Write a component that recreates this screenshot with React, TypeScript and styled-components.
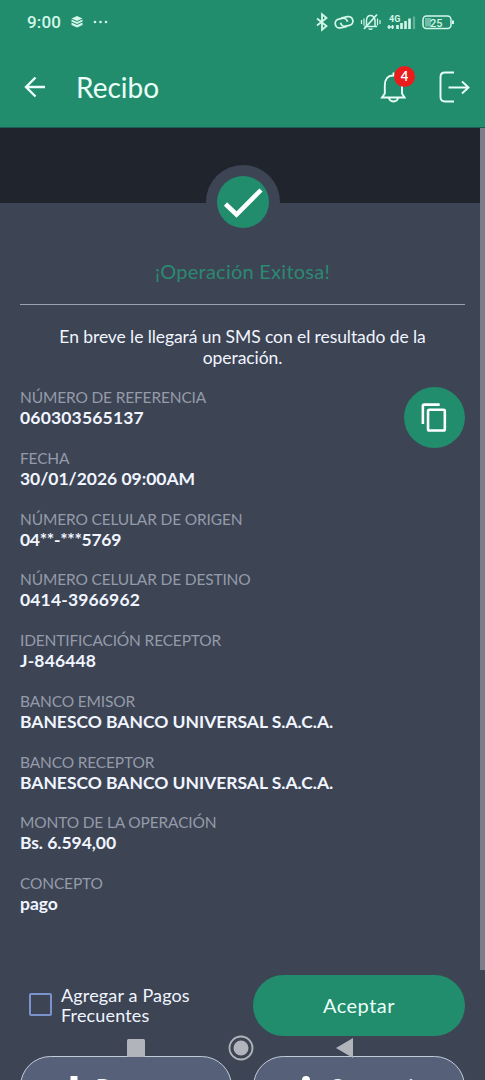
import React from 'react';
import styled, { createGlobalStyle } from 'styled-components';

interface Campo {
  etiqueta: string;
  valor: string;
  espaciado?: number;
}

const campos: Campo[] = [
  { etiqueta: 'NÚMERO DE REFERENCIA', valor: '060303565137', espaciado: 0.17 },
  { etiqueta: 'FECHA', valor: '30/01/2026 09:00AM' },
  { etiqueta: 'NÚMERO CELULAR DE ORIGEN', valor: '04**-***5769', espaciado: -0.3 },
  { etiqueta: 'NÚMERO CELULAR DE DESTINO', valor: '0414-3966962', espaciado: 0.15 },
  { etiqueta: 'IDENTIFICACIÓN RECEPTOR', valor: 'J-846448', espaciado: 0.15 },
  { etiqueta: 'BANCO EMISOR', valor: 'BANESCO BANCO UNIVERSAL S.A.C.A.' },
  { etiqueta: 'BANCO RECEPTOR', valor: 'BANESCO BANCO UNIVERSAL S.A.C.A.' },
  { etiqueta: 'MONTO DE LA OPERACIÓN', valor: 'Bs. 6.594,00' },
  { etiqueta: 'CONCEPTO', valor: 'pago' },
];

const GlobalStyle = createGlobalStyle`
  * {
    box-sizing: border-box;
  }

  body {
    margin: 0;
    background: #3d4454;
    font-family: Lato, sans-serif;
  }

  svg {
    display: block;
    flex: none;
  }

  button {
    font-family: inherit;
    padding: 0;
    border: none;
    background: none;
    color: inherit;
  }
`;

const Screen = styled.div`
  position: relative;
  width: 485px;
  height: 1080px;
  overflow: hidden;
  display: flex;
  flex-direction: column;
  background: #3d4454;
  color: #f0f5ff;
`;

const Header = styled.header`
  flex: none;
  height: 128px;
  background: #218d6c;
  border-bottom: 1px solid #1c5c52;
  color: #e9fff8;
`;

const StatusBar = styled.div`
  height: 44px;
  padding: 0 31px 0 27px;
  display: flex;
  align-items: center;
  justify-content: space-between;
  color: #d3f7e9;
`;

const StatusGroup = styled.div<{ $gap: number }>`
  display: flex;
  align-items: center;
  gap: ${({ $gap }) => $gap}px;
`;

const Clock = styled.span`
  font-family: Roboto, sans-serif;
  font-size: 17px;
  font-weight: 500;
  letter-spacing: 0.15px;
`;

const TitleBar = styled.div`
  height: 84px;
  padding: 2px 15px 0 23px;
  display: flex;
  align-items: center;
`;

const Title = styled.h1`
  flex: 1;
  margin: 0 0 0 29px;
  font-size: 28px;
  font-weight: 400;
  line-height: 34px;
`;

const BellButton = styled.button`
  position: relative;
  width: 26px;
  height: 34px;
  margin-right: 33px;
`;

const Badge = styled.span`
  position: absolute;
  left: 14px;
  top: -4px;
  width: 21px;
  height: 21px;
  border-radius: 50%;
  background: #ea1c1c;
  color: #fff;
  font-size: 13px;
  font-weight: 700;
  line-height: 21px;
  text-align: center;
`;

const Backdrop = styled.div`
  flex: none;
  height: 75px;
  padding-top: 37px;
  display: flex;
  justify-content: center;
  background: #20242d;
`;

const CheckRing = styled.div`
  position: relative;
  width: 74px;
  height: 74px;
  border-radius: 50%;
  background: #3d4454;
  display: flex;
  align-items: center;
  justify-content: center;
`;

const Content = styled.main`
  flex: none;
  padding: 56px 20px 0;
`;

const SuccessTitle = styled.h2`
  margin: 0;
  padding-bottom: 20px;
  border-bottom: 1px solid #98a1b0;
  color: #2b8a72;
  font-size: 20px;
  font-weight: 400;
  line-height: 25px;
  letter-spacing: 0.25px;
  text-align: center;
`;

const Message = styled.p`
  margin: 21px 0 0;
  font-size: 17.5px;
  line-height: 21px;
  letter-spacing: -0.08px;
  text-align: center;
`;

const Details = styled.div`
  display: flex;
  justify-content: space-between;
  margin-top: 19px;
`;

const FieldList = styled.dl`
  margin: 0;
`;

const Field = styled.div`
  height: 60.75px;
`;

const FieldLabel = styled.dt`
  color: #949ba9;
  font-size: 15.5px;
  line-height: 21px;
  letter-spacing: -0.16px;
`;

const FieldValue = styled.dd<{ $spacing: number }>`
  margin: 0;
  font-size: 17.5px;
  font-weight: 700;
  line-height: 20px;
  letter-spacing: ${({ $spacing }) => $spacing}px;
`;

const CopyButton = styled.button`
  width: 61px;
  height: 61px;
  border-radius: 50%;
  background: #218d6c;
  display: flex;
  align-items: center;
  justify-content: center;
`;

const Actions = styled.div`
  display: grid;
  grid-template-columns: 212px 212px;
  column-gap: 21px;
  row-gap: 20px;
  margin-top: 41px;
`;

const CheckLabel = styled.label`
  display: flex;
  align-items: center;
  gap: 9px;
  padding-left: 9px;
  font-size: 18px;
  line-height: 20px;
  letter-spacing: 0.15px;
`;

const CheckBox = styled.span`
  flex: none;
  width: 23px;
  height: 23px;
  margin-bottom: 2px;
  border: 2px solid #7b93cc;
  border-radius: 2px;
`;

const PrimaryButton = styled.button`
  height: 61px;
  border-radius: 31px;
  background: #218d6c;
  color: #e9fff8;
  font-size: 20px;
  letter-spacing: 0.5px;
`;

const SecondaryButton = styled.button<{ $gap: number }>`
  height: 61px;
  border: 1px solid #c0cbdc;
  border-radius: 31px;
  background: #566079;
  display: flex;
  align-items: center;
  justify-content: center;
  gap: ${({ $gap }) => $gap}px;
  font-size: 20px;
  letter-spacing: 0.3px;

  span {
    padding-bottom: 2px;
  }
`;

const ScrollThumb = styled.div`
  position: absolute;
  top: 128px;
  right: 0;
  width: 5px;
  height: 842px;
  background: #7c7c8a;
`;

const NavBar = styled.nav`
  position: absolute;
  left: 127px;
  top: 1035px;
  width: 227px;
  display: flex;
  align-items: center;
  justify-content: space-between;
`;

const App: React.FC = () => (
  <>
    <GlobalStyle />
    <Screen>
      <Header>
        <StatusBar>
          <StatusGroup $gap={10}>
            <Clock>9:00</Clock>
            <svg width="12" height="12" viewBox="0 0 12 12" fill="currentColor">
              <path d="M6 0l5.500 2.500L6 5 .5 2.500z" />
              <path d="M.5 3.500l5.500 2.400 5.500-2.400v2L6 8 .5 5.500z" />
              <path d="M.5 6.500l5.500 2.400 5.500-2.400v2.500L6 11.500.5 9z" />
            </svg>
            <svg width="15" height="4" viewBox="0 0 15 4" fill="currentColor">
              <circle cx="2" cy="2" r="1.300" />
              <circle cx="7.500" cy="2" r="1.300" />
              <circle cx="13" cy="2" r="1.300" />
            </svg>
          </StatusGroup>
          <svg width="138" height="20" viewBox="316 11 138 20" fill="none" stroke="currentColor" strokeWidth="1.500">
            <path d="M317 17.500l9.500 7.500-4.500 3.800V13.200l4.500 3.800-9.500 7.500" strokeWidth="1.800" />
            <g transform="rotate(-12 344 21)" strokeWidth="1.800">
              <path d="M346 26h-6.500a4.500 4.500 0 0 1 0-9h3.500a4.500 4.500 0 0 1 4.500 4.500" />
              <path d="M342 16.500h6.500a4.500 4.500 0 0 1 0 9H345a4.500 4.500 0 0 1-4.500-4.500" />
            </g>
            <path d="M364.500 25.500h12.500M366.500 25v-6q.5-4.500 4-4.500t4.500 4.500v6M368.500 27.500q2 1.500 4 0" />
            <path d="M364 28l13-14.500" strokeWidth="1.800" />
            <path d="M361.500 19v4M364 17.500v7M377.500 17.500v7M380 19v4" strokeWidth="1.200" />
            <path d="M389 28v-4M392.500 28v-4M387.500 26h6.500" strokeWidth="1.500" />
            <path d="M397.500 28v-4M401.500 28v-6M405.500 28v-8M409.500 28v-10.500" strokeWidth="2.600" />
            <path d="M414 28v-12.500" strokeWidth="2.200" opacity="0.350" />
            <rect x="423" y="15" width="28" height="12.500" rx="3.500" />
            <path d="M425 17h6v8.500h-6z" fill="currentColor" stroke="none" opacity="0.450" />
            <path d="M453 19.500v3.500" strokeWidth="2" />
            <text x="389" y="20.500" fontFamily="Roboto, sans-serif" fontSize="9" fontWeight="700" fill="currentColor" stroke="none">4G</text>
            <text x="430" y="25.500" fontFamily="Roboto, sans-serif" fontSize="11" fontWeight="500" fill="currentColor" stroke="none">25</text>
          </svg>
        </StatusBar>
        <TitleBar>
          <svg width="24" height="24" viewBox="0 0 24 24" fill="none" stroke="currentColor" strokeWidth="2.400">
            <path d="M22 12H3M12.500 2.500L3 12l9.500 9.500" />
          </svg>
          <Title>Recibo</Title>
          <BellButton aria-label="Notificaciones">
            <svg width="26" height="34" viewBox="0 0 26 34" fill="none" stroke="currentColor" strokeWidth="1.900">
              <path d="M2 27.500l2.800-4v-8C4.800 9 8 5.500 13 5.500s9 3.500 9 10v8l2.500 4zM13.500 2.500v3M9 27.500a4.500 4 0 0 0 9 0" />
            </svg>
            <Badge>4</Badge>
          </BellButton>
          <svg width="31" height="32" viewBox="0 0 31 32" fill="none" stroke="currentColor" strokeWidth="1.900">
            <path d="M15 1.500H6Q1.500 1.500 1.500 6v20q0 4.500 4.500 4.500h9M9.500 16.500h20M23 10.500l6.500 6-6.500 6" />
          </svg>
        </TitleBar>
      </Header>

      <Backdrop>
        <CheckRing>
          <svg width="52" height="52" viewBox="0 0 52 52">
            <circle cx="26" cy="26" r="26" fill="#218d6c" />
            <path d="M8.500 28l11 10.500L44 14" fill="none" stroke="#fff" strokeWidth="4.500" />
          </svg>
        </CheckRing>
      </Backdrop>

      <Content>
        <SuccessTitle>¡Operación Exitosa!</SuccessTitle>
        <Message>
          En breve le llegará un SMS con el resultado de la
          <br />
          operación.
        </Message>
        <Details>
          <FieldList>
            {campos.map((campo) => (
              <Field key={campo.etiqueta}>
                <FieldLabel>{campo.etiqueta}</FieldLabel>
                <FieldValue $spacing={campo.espaciado ?? -0.03}>{campo.valor}</FieldValue>
              </Field>
            ))}
          </FieldList>
          <CopyButton aria-label="Copiar">
            <svg width="31" height="31" viewBox="0 0 24 24" fill="#fff">
              <path d="M16 1H4a2 2 0 0 0-2 2v14h2V3h12zm3 4H8a2 2 0 0 0-2 2v14a2 2 0 0 0 2 2h11a2 2 0 0 0 2-2V7a2 2 0 0 0-2-2zm0 16H8V7h11z" />
            </svg>
          </CopyButton>
        </Details>
        <Actions>
          <CheckLabel>
            <CheckBox />
            <span>
              Agregar a Pagos
              <br />
              Frecuentes
            </span>
          </CheckLabel>
          <PrimaryButton>Aceptar</PrimaryButton>
          <SecondaryButton $gap={13}>
            <svg width="18" height="20" viewBox="0 0 18 20" fill="#fff">
              <path d="M5.500 0h7v8H17l-8 7.500L1 8h4.500zM1 18h16v2H1z" />
            </svg>
            <span>Descargar</span>
          </SecondaryButton>
          <SecondaryButton $gap={15}>
            <svg width="18" height="20" viewBox="0 0 18 20" fill="#fff">
              <circle cx="9" cy="4" r="4" />
              <circle cx="3" cy="16" r="3" />
              <circle cx="15" cy="16" r="3" />
              <path d="M9 4L3 16M9 4l6 12" stroke="#fff" strokeWidth="2" />
            </svg>
            <span>Compartir</span>
          </SecondaryButton>
        </Actions>
      </Content>

      <ScrollThumb />
      <NavBar>
        <svg width="18" height="18" viewBox="0 0 18 18">
          <rect width="18" height="18" rx="1.500" fill="#b2b4bb" />
        </svg>
        <svg width="26" height="26" viewBox="0 0 26 26">
          <circle cx="13" cy="13" r="11.500" fill="none" stroke="#b2b4bb" strokeWidth="1.800" />
          <circle cx="13" cy="13" r="7.500" fill="#b2b4bb" />
        </svg>
        <svg width="18" height="22" viewBox="0 0 18 22">
          <path d="M17 1v20L0 11z" fill="#b2b4bb" />
        </svg>
      </NavBar>
    </Screen>
  </>
);

export default App;
